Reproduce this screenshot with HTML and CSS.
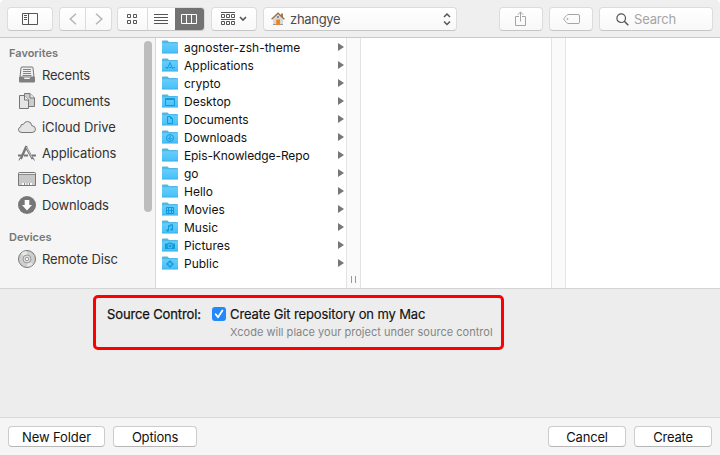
FILE: index.html
```html
<!DOCTYPE html>
<html lang="en">
<head>
<meta charset="utf-8">
<title>Save</title>
<link rel="stylesheet" href="styles.css">
</head>
<body>
<svg width="0" height="0" class="defs">
  <defs>
    <linearGradient id="blue" x1="0" y1="0" x2="0" y2="1"><stop offset="0" stop-color="#68cdfa"/><stop offset="1" stop-color="#46c0fb"/></linearGradient>
    <symbol id="folder" viewBox="0 0 16 14">
      <path d="M0 13V1.600Q0 .5 1 .5H5.200Q6 .5 6.400 1.200L6.800 2H15Q16 2 16 3V13Z" fill="#4fb8e6"/>
      <path d="M0 3.200H16V13H0Z" fill="url(#blue)"/>
      <path d="M0 13.200H16" stroke="#3c9dca" stroke-width=".7"/>
    </symbol>
  </defs>
</svg>
<div class="window">
  <header class="toolbar">
    <div class="tool sidebar-toggle"><svg width="16" height="12" fill="none" stroke="#555"><path d="M.5.5H15.5V11.5H.5ZM6.5.5V11.5M2 2.5H5M2 4.5H5M2 6.5H5"/></svg></div>
    <div class="tool nav">
      <span><svg width="8" height="12" fill="none" stroke="#b5b5b5" stroke-width="1.5"><path d="M7 .7L1.2 6L7 11.3"/></svg></span>
      <span><svg width="8" height="12" fill="none" stroke="#b5b5b5" stroke-width="1.5"><path d="M1 .7L6.8 6L1 11.3"/></svg></span>
    </div>
    <div class="tool views">
      <span><svg width="10" height="10" fill="none" stroke="#555"><path d="M.5.5H3.5V3.5H.5ZM6.5.5H9.5V3.5H6.5ZM.5 6.5H3.5V9.5H.5ZM6.5 6.5H9.5V9.5H6.5Z"/></svg></span>
      <span><svg width="14" height="10" stroke="#555"><path d="M0 .5H14M0 3.5H14M0 6.5H14M0 9.5H14"/></svg></span>
      <span class="selected"><svg width="16" height="10" fill="none" stroke="#fff"><path d="M.5.5H15.5V9.5H.5ZM5.5.5V9.5M10.5.5V9.5"/></svg></span>
    </div>
    <div class="tool group"><svg width="26" height="14" fill="none" stroke="#555"><path d="M0 .5H14M0 7.5H14M.5 2.5H3.5V5.5H.5ZM5.5 2.5H8.5V5.5H5.5ZM10.5 2.5H13.5V5.5H10.5ZM.5 9.5H3.5V12.5H.5ZM5.5 9.5H8.5V12.5H5.5ZM10.5 9.5H13.5V12.5H10.5Z"/><path d="M19 5L22 8L25 5" stroke-width="1.6"/></svg></div>
    <div class="tool path">
      <svg width="14" height="14"><path d="M2 6V13H12V6L7 2Z" fill="#d7d9dc"/><path d="M2 12.5H12" stroke="#999"/><path d="M10 1.5H12V5H10Z" fill="#a77a55"/><path d="M.6 7.2L7 1.3L13.4 7.2" fill="none" stroke="#9d7146" stroke-width="1.4"/><path d="M5.200 7.500H9V13H5.200Z" fill="#ef8420"/><circle cx="7" cy="5" r="1" fill="#667789"/></svg>
      <span class="path-name">zhangye</span>
      <svg width="8" height="14" class="stepper" fill="none" stroke="#555" stroke-width="1.5"><path d="M1 5L4 2L7 5M1 9.5L4 12.5L7 9.5"/></svg>
    </div>
    <div class="tool share"><svg width="12" height="16" fill="none" stroke="#a5a5a5"><path d="M4 5.5H.5V14.5H10.5V5.5H7M5.5 10.5V1M2.8 3.7L5.5 1L8.2 3.7"/></svg></div>
    <div class="tool tag"><svg width="17" height="11" fill="none" stroke="#a5a5a5"><path d="M5 .5H15Q16.500 .5 16.500 2V8.500Q16.500 9.500 15 9.500H5Q4 9.500 .8 5.300Q.5 5 .8 4.700Q4 .5 5 .5Z"/><circle cx="4.500" cy="5" r=".6"/></svg></div>
    <div class="tool search"><svg width="13" height="13" fill="none" stroke="#555" stroke-width="1.2"><circle cx="5.200" cy="5.200" r="4.300"/><path d="M8.300 8.300L12.300 12.300" stroke-width="1.500"/></svg><span class="placeholder">Search</span></div>
  </header>
  <main class="browser">
    <aside class="sidebar">
      <h2 class="heading">Favorites</h2>
      <div class="place"><svg viewBox="0 0 18 18"><path d="M3 2Q3 1 4 1H14Q15 1 15 2L16 11H2Z" fill="#efefef" stroke="#777"/><path d="M5 3.500H13M5 5.500H13M5 7.500H13M4.500 9.500H13.500" stroke="#858585"/><path d="M1 11H5.500L6.500 13H11.500L12.500 11H17V15.500Q17 16.500 16 16.500H2Q1 16.500 1 15.500Z" fill="#808080"/></svg><span>Recents</span></div>
      <div class="place"><svg viewBox="0 0 18 18" stroke="#777"><path d="M6.500 1.500H12L16.500 6V14.500H6.500Z" fill="#ccc"/><path d="M12 1.500V6H16.500" fill="#e8e8e8"/><path d="M1.500 3.500H6.500L10.500 8V16.500H1.500Z" fill="#e5e5e5"/><path d="M6.500 3.500V8H10.500" fill="#f2f2f2"/></svg><span>Documents</span></div>
      <div class="place"><svg viewBox="0 0 18 18"><path d="M4 14.500Q.5 14.500 .5 11.700Q.5 9.600 2.700 8.800Q2.500 5.800 5.500 6.300Q6.500 3.500 9.600 3.500Q13.500 3.700 13.700 7.500Q17.500 8.100 17.500 11.300Q17.300 14.500 14 14.500Z" fill="#e5e5e5" stroke="#777"/></svg><span class="icloud">iCloud Drive</span></div>
      <div class="place"><svg viewBox="0 0 18 18" fill="none" stroke="#777"><path d="M8.500 2L2.800 15M7.600 2.500L14.700 15" stroke-width="2.400"/><path d="M0 11.500H4M6 11.500H10M14 11.500H18" stroke-width="2"/><path d="M2 14L1 16.500M15 14L16.500 16.500"/><path d="M8.500 3.500L14 13.500" stroke="#ccc"/></svg><span class="icloud">Applications</span></div>
      <div class="place"><svg viewBox="0 0 18 18"><path d="M.5 3.500Q.5 2.500 1.500 2.500H16.500Q17.500 2.500 17.500 3.500V15.500H.5Z" fill="#c8c8c8" stroke="#777"/><path d="M1 4.500H17" stroke="#8b8b8b"/><path d="M1 3.500H17" stroke="#eee"/><path d="M4 13H14V15H4Z" fill="#fff"/><path d="M6.500 13V15M9 13V15M11.500 13V15" stroke="#888"/></svg><span>Desktop</span></div>
      <div class="place"><svg viewBox="0 0 18 18"><circle cx="9" cy="9" r="9" fill="#777"/><path d="M6.700 4H11.300V9H14L9 14.500L4 9H6.700Z" fill="#fff"/></svg><span>Downloads</span></div>
      <h2 class="heading devices">Devices</h2>
      <div class="place"><svg viewBox="0 0 18 18" fill="none" stroke="#999"><circle cx="9" cy="9" r="8.500" fill="#cfcfcf" stroke="#777"/><path d="M9 9L3 3.500Q6 .8 9 1.500ZM9 9L15 14.500Q12 17 9 16.500Z" fill="#e7e7e7" stroke="none"/><circle cx="9" cy="9" r="4" fill="#ddd"/><circle cx="9" cy="9" r="1.700" fill="#f7f7f7"/></svg><span class="icloud">Remote Disc</span></div>
      <h2 class="heading shared">Shared</h2>
      <i class="scrollbar"></i>
    </aside>
    <section class="files">
      <div class="file"><svg><use href="#folder"/></svg><span>agnoster-zsh-theme</span><i></i></div>
      <div class="file"><svg><use href="#folder"/><path d="M8.200 4.500L5 11M7.800 4.500L11 11M3.500 9.500H5M7 9.500H9.500M11.500 9.500H13" class="glyph"/></svg><span>Applications</span><i></i></div>
      <div class="file"><svg><use href="#folder"/></svg><span>crypto</span><i></i></div>
      <div class="file"><svg><use href="#folder"/><path d="M3.500 4.500H12.500V11.500H3.500ZM3.500 5.500H12.500" class="glyph"/></svg><span>Desktop</span><i></i></div>
      <div class="file"><svg><use href="#folder"/><path d="M5.500 4.500H8.500L10.500 6.500V11.500H5.500ZM8.500 4.500V6.500H10.500" class="glyph"/></svg><span>Documents</span><i></i></div>
      <div class="file"><svg><use href="#folder"/><circle cx="8" cy="8" r="3.500" class="glyph"/><path d="M8 5.500V9.500M6.200 8L8 9.800L9.800 8" class="glyph"/></svg><span>Downloads</span><i></i></div>
      <div class="file"><svg><use href="#folder"/></svg><span class="tight">Epis-Knowledge-Repo</span><i></i></div>
      <div class="file"><svg><use href="#folder"/></svg><span>go</span><i></i></div>
      <div class="file"><svg><use href="#folder"/></svg><span>Hello</span><i></i></div>
      <div class="file"><svg><use href="#folder"/><path d="M4.500 5.500H11.500V11.500H4.500ZM6.500 5.500V11.500M9.500 5.500V11.500M4.500 8.500H11.500" class="glyph"/></svg><span>Movies</span><i></i></div>
      <div class="file"><svg><use href="#folder"/><path d="M6.500 10.500V5.500L10.500 4.500V9.500M6.500 6.500L10.500 5.500" class="glyph"/><circle cx="5.700" cy="10.500" r="1.300" fill="#139bd9"/><circle cx="9.700" cy="9.500" r="1.300" fill="#139bd9"/></svg><span>Music</span><i></i></div>
      <div class="file"><svg><use href="#folder"/><path d="M3 5.500H5.500L6.500 4.500H9.500L10.500 5.500H13V11H3Z" fill="#139bd9"/><circle cx="8" cy="8" r="2" fill="none" stroke="#56c6fb"/></svg><span>Pictures</span><i></i></div>
      <div class="file"><svg><use href="#folder"/><path d="M8 4L12 8L8 12L4 8Z" fill="#139bd9"/><path d="M8 6.600L9.400 8L8 9.400L6.600 8ZM5.500 5.500L6.500 6.500M10.500 5.500L9.500 6.500M5.500 10.500L6.500 9.500M10.500 10.500L9.500 9.500" fill="#56c6fb" stroke="#56c6fb" stroke-width=".6"/></svg><span>Public</span><i></i></div>
    </section>
    <div class="gutter"><i class="grip"></i></div>
    <section class="empty-column"></section>
    <div class="gutter"></div>
    <section class="last-column"></section>
  </main>
  <section class="accessory">
    <div class="source-control">
      <span class="label">Source Control:</span>
      <span class="checkbox"><svg width="14" height="14" fill="none" stroke="#fff" stroke-width="1.800" stroke-linecap="round" stroke-linejoin="round"><path d="M3.700 7.300L6 10.200L10.400 3.400"/></svg></span>
      <div class="description"><div class="create-git">Create Git repository on my Mac</div><div class="hint">Xcode will place your project under source control</div></div>
    </div>
  </section>
  <footer class="actions">
    <div class="button new-folder"><span>New Folder</span></div>
    <div class="button options"><span>Options</span></div>
    <div class="button cancel"><span>Cancel</span></div>
    <div class="button create"><span>Create</span></div>
  </footer>
</div>
</body>
</html>
```
FILE: styles.css
```css
* { box-sizing: border-box; }
body { margin: 0; background: #fff; font: 13px/18px Inter, "Liberation Sans", sans-serif; color: #222; letter-spacing: -.2px; }
svg { display: block; flex: none; overflow: visible; }
.defs { position: absolute; }
.window { width: 720px; height: 455px; display: flex; flex-direction: column; overflow: hidden; border-radius: 5px 5px 0 0; background: #ededed; }
.toolbar { height: 38px; flex: none; display: flex; padding: 7px 7px 0; background: #efefef; border-bottom: 1px solid #c9c9c9; }
.tool { height: 24px; display: flex; align-items: center; justify-content: center; background: linear-gradient(#fff, #f8f8f8); border: 1px solid #dcdcdc; border-bottom-color: #c6c6c6; border-radius: 4px; }
.sidebar-toggle { width: 46px; }
.nav { width: 53px; margin-left: 6px; }
.nav span { flex: 1; height: 22px; display: flex; align-items: center; justify-content: center; }
.nav span + span { border-left: 1px solid #dcdcdc; }
.views { width: 88px; margin-left: 5px; overflow: hidden; }
.views span { width: 29px; height: 23px; display: flex; align-items: center; justify-content: center; }
.views span + span { border-left: 1px solid #dcdcdc; }
.views .selected { width: 30px; margin: -1px -1px -1px 0; height: 24px; background: #727272; border-color: #727272; }
.views .selected svg { margin-right: 3px; }
.group { width: 46px; margin-left: 6px; }
.path { width: 194px; margin-left: 6px; justify-content: flex-start; padding-left: 7px; }
.path-name { margin-left: 5px; color: #4b4b4b; letter-spacing: -.3px; }
.stepper { margin-left: auto; margin-right: 5px; }
.share { width: 44px; margin-left: 42px; }
.tag { width: 44px; margin-left: 6px; }
.search { width: 114px; margin-left: 6px; justify-content: flex-start; padding-left: 16px; }
.placeholder { margin-left: 5px; color: #a5a5a5; }
.browser { height: 250px; flex: none; display: flex; background: #fff; }
.sidebar { position: relative; width: 156px; flex: none; padding-top: 6px; overflow: hidden; background: #f5f5f5; border-right: 1px solid #d9d9d9; }
.heading { margin: 0 0 0 9px; height: 18px; font-size: 11px; line-height: 18px; font-weight: 600; color: #777; letter-spacing: 0; }
.devices { margin-top: 10px; }
.shared { margin-top: 11px; color: #aaa; }
.place { height: 26px; display: flex; align-items: center; padding-left: 18px; color: #333; }
.place svg { width: 18px; height: 18px; margin-right: 6px; }
.place .icloud { letter-spacing: -.13px; }
.scrollbar { position: absolute; left: 144px; top: 3px; width: 8px; height: 171px; border-radius: 4px; background: #bdbdbd; }
.files { width: 190px; flex: none; }
.file { height: 18px; display: flex; align-items: center; padding: 0 2px 0 6px; color: #111; font-size: 12px; line-height: 18px; letter-spacing: 0; }
.file span { margin-top: 2px; }
.file .tight { letter-spacing: -.1px; }
.file svg { width: 16px; height: 14px; margin-right: 6px; }
.file i { margin-left: auto; border: 4px solid transparent; border-left: 6px solid #777; border-right: 0; }
.glyph { fill: none; stroke: #139bd9; }
.gutter { width: 15px; flex: none; display: flex; align-items: flex-end; justify-content: center; background: #fafafa; border: solid #e3e3e3; border-width: 0 1px; }
.grip { width: 5px; height: 7px; margin-bottom: 5px; border: solid #999; border-width: 0 1px; }
.empty-column { width: 190px; flex: none; }
.last-column { flex: 1; }
.accessory { height: 129px; flex: none; padding: 7px 0 0 93px; border-top: 1px solid #d4d4d4; background: #ededed; }
.source-control { width: 411px; height: 55px; margin-top: -1px; display: flex; align-items: flex-start; padding: 8px 0 0 11px; border: 3px solid #f00; border-radius: 5px; color: #111; }
.label { width: 105px; line-height: 17px; letter-spacing: -.13px; -webkit-text-stroke: .25px #111; }
.checkbox { width: 14px; height: 14px; margin-top: 1px; border-radius: 3px; background: #2388fc; }
.description { margin-left: 4px; white-space: nowrap; }
.create-git { line-height: 17px; letter-spacing: -.12px; -webkit-text-stroke: .15px #111; }
.hint { margin-top: 1px; font-size: 11px; line-height: 16px; letter-spacing: .02px; color: #858585; }
.actions { flex: 1; display: flex; padding: 8px 8px 0; background: #f5f5f5; border-top: 1px solid #d8d8d8; }
.button { height: 21px; display: flex; align-items: center; justify-content: center; background: #fff; border: 1px solid #ccc; border-bottom-color: #b6b6b6; border-radius: 4px; color: #111; }
.new-folder { width: 97px; letter-spacing: -.1px; }
.options { width: 84px; margin-left: 8px; }
.cancel { width: 78px; margin-left: auto; }
.create { width: 78px; margin-left: 8px; }
```
